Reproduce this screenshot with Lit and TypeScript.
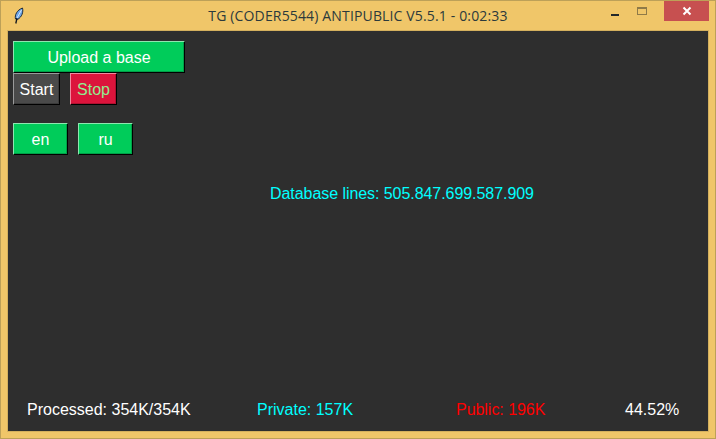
import { LitElement, html, css, svg } from "lit";
import { customElement } from "lit/decorators.js";

@customElement("app-root")
export class AppRoot extends LitElement {
  static styles = css`
    :host {
      display: block;
      width: 716px;
      height: 439px;
      font-family: "Liberation Sans", Arial, sans-serif;
      font-size: 16px;
    }
    .window {
      box-sizing: border-box;
      width: 716px;
      height: 439px;
      background: #f0c669;
      border: 1px solid #bda058;
      display: flex;
      flex-direction: column;
    }
    .titlebar {
      height: 29px;
      flex: none;
      position: relative;
      display: flex;
      align-items: center;
      justify-content: center;
      color: #2c3a3c;
      font-family: "Open Sans", "Noto Sans", sans-serif;
      font-size: 14px;
      box-sizing: border-box;
    }
    .title {
      white-space: nowrap;
      letter-spacing: 0.15px;
    }
    .feather {
      position: absolute;
      left: 12px;
      top: 6px;
      width: 12px;
      height: 18px;
    }
    .controls {
      position: absolute;
      right: 6px;
      top: 0;
      height: 20px;
      display: flex;
      align-items: center;
    }
    .ctl {
      display: flex;
      align-items: center;
      justify-content: center;
      height: 20px;
    }
    .min {
      width: 27px;
    }
    .min i {
      display: block;
      width: 8px;
      height: 2px;
      background: #23282a;
      margin-top: 7px;
    }
    .max {
      width: 28px;
      margin-right: 8px;
    }
    .max i {
      display: block;
      box-sizing: border-box;
      width: 10px;
      height: 8px;
      border: 1px solid #8f7a48;
      border-top-width: 2px;
    }
    .close {
      width: 45px;
      background: #c75050;
    }
    .client {
      box-sizing: border-box;
      margin: 1px 7px 7px 7px;
      flex: 1;
      background: #2e2e2e;
      box-shadow: 0 0 0 1px #d4b05e;
      padding: 10px 5px 10px;
      display: flex;
      flex-direction: column;
      color: #fff;
    }
    .row {
      display: flex;
      gap: 10px;
    }
    .lang {
      margin-top: 18px;
    }
    button {
      box-sizing: border-box;
      height: 32px;
      padding: 1px 0 0 0;
      margin: 0;
      font: inherit;
      border-style: solid;
      border-width: 1px;
      border-color: #8fe6b0 #000 #000 #8fe6b0;
      box-shadow: inset -1px -1px 0 #00a048;
      background: #00cc5a;
      color: #fff;
      display: block;
    }
    .upload {
      width: 172px;
    }
    .start {
      width: 47px;
      background: #4a4a4a;
      border-color: #9a9a9a #000 #000 #9a9a9a;
      box-shadow: inset -1px -1px 0 #3a3a3a;
    }
    .stop {
      width: 47px;
      background: #dc143c;
      color: #90ee90;
      border-color: #f08aa0 #000 #000 #f08aa0;
      box-shadow: inset -1px -1px 0 #b01030;
    }
    .small {
      width: 55px;
    }
    .db {
      color: #00ffff;
      margin-top: 30px;
      padding-left: 257px;
      line-height: 18px;
      letter-spacing: -0.06px;
    }
    .status {
      margin-top: auto;
      display: grid;
      grid-template-columns: 230px 200px 168px auto;
      padding-left: 14px;
      line-height: 18px;
      margin-bottom: 2px;
    }
    .cyan {
      color: #00ffff;
    }
    .red {
      color: #ff0000;
      margin-left: -1px;
      letter-spacing: -0.04px;
    }
  `;

  render() {
    return html`
      <div class="window">
        <div class="titlebar">
          <svg class="feather" viewBox="0 0 12 18">
            <path d="M2.5 12 C1.5 8 4 3 9.5 1 C10.5 5 9 10 4.5 12.5 Z" fill="#6ea6e6" stroke="#1d2a3a" stroke-width="1"/>
            <path d="M8.5 3 L4 11" stroke="#d8e8fa" stroke-width="1" fill="none"/>
            <path d="M4 11 L2.8 16.5" stroke="#10151c" stroke-width="1.3" fill="none"/>
          </svg>
          <span class="title">TG (CODER5544) ANTIPUBLIC V5.5.1 - 0:02:33</span>
          <div class="controls">
            <div class="ctl min"><i></i></div>
            <div class="ctl max"><i></i></div>
            <div class="ctl close">
              <svg width="10" height="10" viewBox="0 0 10 10">
                ${svg`<path d="M1.5 1.5 L8.5 8.5 M8.5 1.5 L1.5 8.5" stroke="#fff" stroke-width="2" fill="none"/>`}
              </svg>
            </div>
          </div>
        </div>
        <div class="client">
          <button class="upload">Upload a base</button>
          <div class="row">
            <button class="start">Start</button>
            <button class="stop">Stop</button>
          </div>
          <div class="row lang">
            <button class="small">en</button>
            <button class="small">ru</button>
          </div>
          <div class="db">Database lines: 505.847.699.587.909</div>
          <div class="status">
            <span>Processed: 354K/354K</span>
            <span class="cyan">Private: 157K</span>
            <span class="red">Public: 196K</span>
            <span>44.52%</span>
          </div>
        </div>
      </div>
    `;
  }
}
